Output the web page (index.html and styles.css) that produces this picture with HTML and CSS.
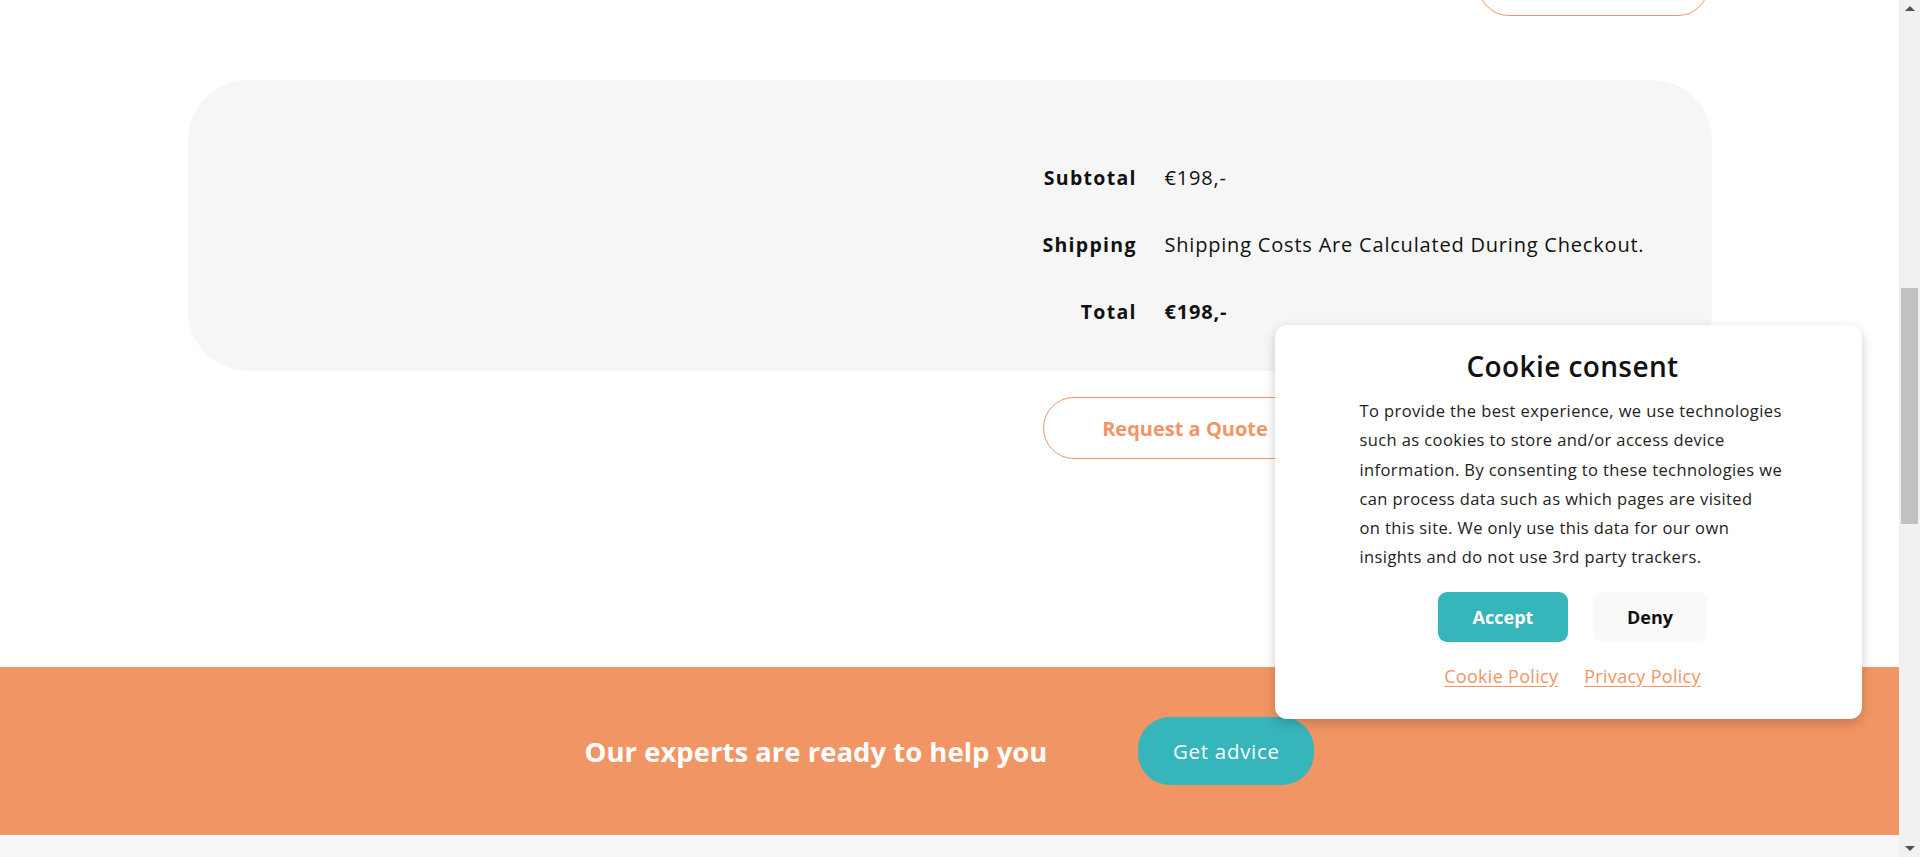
FILE: index.html
```html
<!DOCTYPE html>
<html lang="en">
<head>
<meta charset="utf-8">
<title>Cart</title>
<link rel="stylesheet" href="styles.css">
</head>
<body>
<div class="viewport">
  <div class="page">
    <div class="top-actions">
      <a class="outline-btn update-btn" aria-label="Update cart"></a>
    </div>

    <section class="totals-card">
      <div class="totals-grid">
        <div class="label">Subtotal</div>
        <div class="value">€198,-</div>
        <div class="label">Shipping</div>
        <div class="value">Shipping Costs Are Calculated During Checkout.</div>
        <div class="label">Total</div>
        <div class="value strong">€198,-</div>
      </div>
    </section>

    <div class="quote-row">
      <a class="outline-btn quote-btn">Request a Quote</a>
    </div>

    <section class="cta">
      <h2 class="cta-title">Our experts are ready to help you</h2>
      <a class="cta-btn">Get advice</a>
    </section>
    <div class="footer-strip"></div>

    <div class="cookie-banner">
      <h3 class="cookie-title">Cookie consent</h3>
      <p class="cookie-text">To provide the best experience, we use technologies<br>such as cookies to store and/or access device<br>information. By consenting to these technologies we<br>can process data such as which pages are visited<br>on this site. We only use this data for our own<br>insights and do not use 3rd party trackers.</p>
      <div class="cookie-buttons">
        <button class="cookie-btn accept">Accept</button>
        <button class="cookie-btn deny">Deny</button>
      </div>
      <div class="cookie-links">
        <a class="cookie-link">Cookie Policy</a>
        <a class="cookie-link">Privacy Policy</a>
      </div>
    </div>
  </div>

  <div class="scrollbar">
    <span class="arrow up"></span>
    <div class="track"><div class="thumb"></div></div>
    <span class="arrow down"></span>
  </div>
</div>
</body>
</html>
```

FILE: styles.css
```css
* { box-sizing: border-box; }
html, body { margin: 0; padding: 0; height: 857px; overflow: hidden; }
body {
  font-family: "Open Sans", "Liberation Sans", sans-serif;
  color: #111;
  background: #fff;
}
a { text-decoration: none; }

.viewport { display: flex; height: 857px; }
.page {
  position: relative;
  flex: 1;
  display: flex;
  flex-direction: column;
  background: #fff;
}

/* cut-off button at the very top */
.top-actions {
  width: 1524px;
  margin: 0 auto;
  height: 16px;
  overflow: hidden;
  display: flex;
  justify-content: flex-end;
  align-items: flex-end;
  padding-right: 3px;
}
.outline-btn {
  display: flex;
  align-items: center;
  justify-content: center;
  border: 1px solid #f29565;
  border-radius: 31px;
  color: #f29565;
  font-weight: 700;
  font-size: 20px;
  background: #fff;
}
.update-btn { width: 231px; height: 62px; flex-shrink: 0; }

/* totals card */
.totals-card {
  width: 1524px;
  height: 291px;
  margin: 64px auto 0;
  background: #f6f6f6;
  border-radius: 60px;
  padding: 64px 0 26px 851px;
}
.totals-grid {
  display: grid;
  grid-template-columns: 97px auto;
  grid-auto-rows: 67px;
  column-gap: 29px;
  align-items: center;
}
.label {
  text-align: right;
  font-weight: 700;
  font-size: 19.5px;
  letter-spacing: 1.3px;
  white-space: nowrap;
  color: #111;
  margin-right: -1.3px;
}
.value {
  font-size: 20px;
  letter-spacing: 0.8px;
  white-space: nowrap;
  color: #111;
}
.value.strong { font-weight: 700; }

/* request quote */
.quote-row {
  width: 1524px;
  margin: 26px auto 0;
  padding-left: 855px;
}
.quote-btn { width: 285px; height: 62px; }

/* cta band */
.cta {
  margin-top: 208px;
  height: 168px;
  background: #f29565;
  display: flex;
  align-items: center;
  justify-content: center;
  gap: 91px;
}
.cta-title {
  margin: 0;
  color: #fff;
  font-size: 27.5px;
  font-weight: 700;
}
.cta-btn {
  width: 176px;
  height: 68px;
  border-radius: 32px;
  background: #36b5bb;
  color: #fff;
  font-size: 20.5px;
  letter-spacing: 0.7px;
  display: flex;
  align-items: center;
  justify-content: center;
}
.footer-strip { flex: 1; background: #f8f8f8; }

/* cookie banner */
.cookie-banner {
  position: absolute;
  top: 325px;
  right: 37px;
  width: 587px;
  height: 394px;
  background: #fff;
  border-radius: 12px;
  box-shadow: 0 4px 12px rgba(0, 0, 0, 0.2);
  display: flex;
  flex-direction: column;
  align-items: center;
  padding: 22px 0 0 8px;
}
.cookie-title {
  margin: 0;
  font-size: 28px;
  letter-spacing: 0.4px;
  font-weight: 600;
  line-height: 38px;
  color: #111;
}
.cookie-text {
  margin: 11px 0 0;
  width: 426px;
  font-size: 16.5px;
  letter-spacing: 0.4px;
  line-height: 29.3px;
  color: #222;
  white-space: nowrap;
}
.cookie-buttons {
  margin-top: 20px;
  display: flex;
  gap: 25px;
}
.cookie-btn {
  height: 50px;
  border: 0;
  border-radius: 9px;
  font-family: inherit;
  font-size: 18px;
  font-weight: 700;
  cursor: pointer;
}
.cookie-btn.accept { width: 130px; background: #36b5bb; color: #fff; }
.cookie-btn.deny { width: 114px; background: #f9f9f9; color: #111; }
.cookie-links {
  margin-top: 22px;
  display: flex;
  gap: 26px;
}
.cookie-link {
  color: #f29565;
  font-size: 18px;
  letter-spacing: 0.3px;
  text-decoration: underline;
  text-underline-offset: 3px;
}

/* fake scrollbar */
.scrollbar {
  width: 21px;
  background: #f1f1f1;
  display: flex;
  flex-direction: column;
  align-items: center;
}
.track { flex: 1; width: 100%; padding: 271px 2px 0 2px; }
.thumb { height: 236px; background: #c1c1c1; }
.arrow {
  width: 0; height: 0;
  border-left: 5px solid transparent;
  border-right: 5px solid transparent;
  margin: 6px 0;
}
.arrow.up { border-bottom: 5px solid #505050; }
.arrow.down { border-top: 5px solid #505050; }
```
